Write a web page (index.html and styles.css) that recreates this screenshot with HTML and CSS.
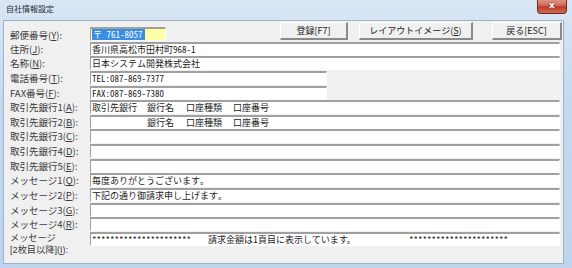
FILE: index.html
```html
<!DOCTYPE html>
<html lang="ja">
<head>
<meta charset="utf-8">
<title>自社情報設定</title>
<link rel="stylesheet" href="styles.css">
</head>
<body>
<div class="window">
  <div class="titlebar">
    <span class="title">自社情報設定</span>
    <span class="close">x</span>
  </div>
  <div class="client">
    <div class="form">
      <div class="lbl lbl-first">郵便番号(<u>Y</u>):</div>
      <div class="field-first">
        <div class="input postal"><span class="sel">〒 761-8057</span></div>
        <div class="buttons">
          <button class="btn btn-save">登録[F7]</button>
          <button class="btn btn-layout">レイアウトイメージ(<u>S</u>)</button>
          <button class="btn btn-back">戻る[ESC]</button>
        </div>
      </div>

      <div class="lbl">住所(<u>J</u>):</div>
      <div class="input">香川県高松市田村町968-1</div>

      <div class="lbl">名称(<u>N</u>):</div>
      <div class="input">日本システム開発株式会社</div>

      <div class="lbl">電話番号(<u>T</u>):</div>
      <div class="input short">TEL:087-869-7377</div>

      <div class="lbl">FAX番号(<u>F</u>):</div>
      <div class="input short">FAX:087-869-7380</div>

      <div class="lbl">取引先銀行1(<u>A</u>):</div>
      <div class="input"><span class="c1">取引先銀行</span><span class="c2">銀行名</span><span class="c3">口座種類</span><span class="c4">口座番号</span></div>

      <div class="lbl">取引先銀行2(<u>B</u>):</div>
      <div class="input"><span class="c1"></span><span class="c2">銀行名</span><span class="c3">口座種類</span><span class="c4">口座番号</span></div>

      <div class="lbl">取引先銀行3(<u>C</u>):</div>
      <div class="input"></div>

      <div class="lbl">取引先銀行4(<u>D</u>):</div>
      <div class="input"></div>

      <div class="lbl">取引先銀行5(<u>E</u>):</div>
      <div class="input"></div>

      <div class="lbl">メッセージ1(<u>Q</u>):</div>
      <div class="input">毎度ありがとうございます。</div>

      <div class="lbl">メッセージ2(<u>P</u>):</div>
      <div class="input">下記の通り御請求申し上げます。</div>

      <div class="lbl">メッセージ3(<u>G</u>):</div>
      <div class="input"></div>

      <div class="lbl">メッセージ4(<u>R</u>):</div>
      <div class="input"></div>

      <div class="lbl lbl-last"><span class="ln">メッセージ</span><span class="ln">[2枚目以降](<u>I</u>):</span></div>
      <div class="input"><span class="m1">**********************</span><span class="m2">請求金額は1頁目に表示しています。</span><span class="m3">**********************</span></div>
    </div>
  </div>
</div>
</body>
</html>
```

FILE: styles.css
```css
* { box-sizing: border-box; }

html, body {
  margin: 0;
  padding: 0;
  width: 572px;
  height: 268px;
  overflow: hidden;
  background: #b9d1ea;
}

.window {
  width: 572px;
  height: 268px;
  display: flex;
  flex-direction: column;
  background: linear-gradient(to bottom, #d9e6f4 0%, #c4d8ee 40%, #bfd4ec 100%);
  padding: 0 8px 4px 3px;
}

.titlebar {
  height: 20px;
  flex: none;
  display: flex;
  justify-content: space-between;
  align-items: flex-start;
  margin-right: -3px;
}

.title {
  font-family: "Noto Sans CJK JP", sans-serif;
  font-size: 8px;
  line-height: 18px;
  color: #1e2a38;
  padding-left: 3px;
}

.close {
  width: 30px;
  height: 15px;
  margin-top: -1px;
  border: 1px solid #6e2a22;
  border-top: none;
  border-radius: 0 0 4px 4px;
  background: linear-gradient(to bottom, #e29b8c 0%, #d06a58 45%, #bf3b26 55%, #d26a4f 100%);
  color: #fff;
  font-family: "DejaVu Sans", sans-serif;
  font-weight: bold;
  font-size: 9px;
  line-height: 13px;
  text-align: center;
  text-shadow: 0 0 2px #5a1a10;
}

.client {
  flex: 1;
  background: #f0f0f0;
  border: 1px solid #9db3cf;
  padding: 1px 0 0 6px;
}

.form {
  display: grid;
  grid-template-columns: 80px 470px;
  grid-template-rows: 19.65px repeat(13, 14.65px) auto;
  font-family: "Noto Sans CJK JP", sans-serif;
  font-size: 9.5px;
}

.lbl {
  height: 14px;
  line-height: 14px;
  color: #3a3a3a;
  white-space: nowrap;
}

.lbl-first { align-self: end; }

.lbl-last {
  height: auto;
  display: flex;
  flex-direction: column;
  margin-top: 0.5px;
  font-family: "Liberation Sans", "Noto Sans CJK JP", sans-serif;
  font-size: 9.2px;
}

.lbl-last .ln {
  display: block;
  height: 12px;
  line-height: 12px;
}

u { text-decoration: underline; text-underline-offset: 1px; }

.field-first {
  display: flex;
  align-items: flex-end;
  align-self: stretch;
}

.input {
  height: 14px;
  background: #fff;
  border-top: 2px solid #a0a0a0;
  border-left: 1px solid #a0a0a0;
  border-right: 1px solid #fff;
  border-bottom: 1px solid #fff;
  padding-left: 1px;
  font-family: "Noto Sans Mono CJK JP", "Noto Sans CJK JP", monospace;
  font-size: 9px;
  line-height: 11px;
  color: #1c1c1c;
  white-space: pre;
  overflow: hidden;
  display: flex;
}

.input.short { width: 237px; }

.postal {
  width: 76px;
  flex: none;
  background: #ffffa6;
  margin-bottom: 0.65px;
}

.sel {
  background: #3a8ee6;
  color: #fff;
  padding: 0 2px 0 1px;
}

.c1 { width: 55px; flex: none; }
.c2 { width: 39px; flex: none; }
.c3 { width: 47px; flex: none; }
.c4 { flex: none; }

.m1 { width: 116px; flex: none; }
.m2 { width: 201px; flex: none; font-family: "Noto Sans CJK JP", sans-serif; }
.m3 { flex: none; }

.buttons {
  display: flex;
  align-self: flex-start;
  margin-left: 114px;
}

.btn {
  height: 18px;
  padding: 0;
  margin: 0;
  background: #f0f0f0;
  border-top: 1px solid #fff;
  border-left: 1px solid #fff;
  border-right: 2px solid #8a8a8a;
  border-bottom: 2px solid #8a8a8a;
  font-family: "Noto Sans CJK JP", sans-serif;
  font-size: 9px;
  line-height: 14px;
  color: #222;
  text-align: center;
}

.btn-save { width: 68px; }
.btn-layout { width: 114px; margin-left: 11px; }
.btn-back { width: 70px; margin-left: 19px; }
```
